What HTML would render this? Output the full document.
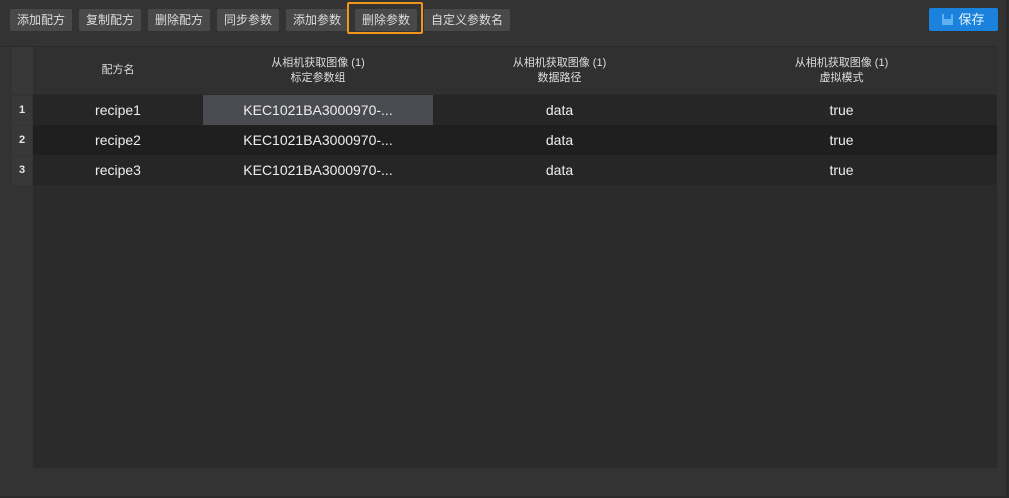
<!DOCTYPE html><html><head><meta charset="utf-8"><style>
body{margin:0;width:1009px;height:498px;background:#333;font-family:"Liberation Sans","Noto Sans CJK SC",sans-serif;color:#e6e6e6;position:relative;overflow:hidden}
.b{position:absolute;top:9px;height:22px;background:#494949;border-radius:2px;font-size:12px;line-height:22px;text-align:center;color:#ddd}
.a{position:absolute}
.hd{position:absolute;top:47px;height:47px;background:#303030;font-size:11px;line-height:15px;text-align:center;color:#ddd;display:flex;align-items:center;justify-content:center;border-right:1px solid #262626}
.c{position:absolute;font-size:14px;text-align:center;line-height:30px;color:#eee}
.n{position:absolute;left:12px;width:20px;height:29px;background:#383838;font-size:11px;font-weight:bold;text-align:center;line-height:29px}
</style></head><body>
<div class="b" style="left:10px;width:62px">添加配方</div>
<div class="b" style="left:79px;width:62px">复制配方</div>
<div class="b" style="left:148px;width:62px">删除配方</div>
<div class="b" style="left:217px;width:62px">同步参数</div>
<div class="b" style="left:286px;width:62px">添加参数</div>
<div class="a" style="left:347px;top:2px;width:76px;height:32px;border:2px solid #f0961e;box-sizing:border-box;border-radius:2px"></div>
<div class="b" style="left:355px;width:62px">删除参数</div>
<div class="b" style="left:424px;width:86px">自定义参数名</div>
<div class="b" style="left:929px;top:8px;width:69px;height:23px;background:#1a82dc;color:#e8f2ff;font-size:13px;line-height:23px"><svg width="11" height="11" viewBox="0 0 11 11" style="margin-right:5px;vertical-align:-1px"><path d="M0 0h2v5h7V0h2v11H0z" fill="#5fb0f0"/></svg>保存</div>
<div class="a" style="left:0;top:46px;width:997px;height:1px;background:#2a2a2a"></div>
<div class="a" style="left:33px;top:94px;width:964px;height:374px;background:#2b2b2b"></div>
<div class="a" style="left:12px;top:47px;width:21px;height:421px;background:#333"></div>
<div class="a" style="left:12px;top:47px;width:21px;height:47px;background:#383838"></div>
<div class="hd" style="left:33px;width:170px">配方名</div>
<div class="hd" style="left:203px;width:230px">从相机获取图像 (1)<br>标定参数组</div>
<div class="hd" style="left:433px;width:253px">从相机获取图像 (1)<br>数据路径</div>
<div class="hd" style="left:686px;width:311px;border-right:none">从相机获取图像 (1)<br>虚拟模式</div>
<div class="a" style="left:33px;top:95px;width:964px;height:30px;background:#262626"></div>
<div class="a" style="left:33px;top:125px;width:964px;height:30px;background:#1f1f1f"></div>
<div class="a" style="left:33px;top:155px;width:964px;height:30px;background:#262626"></div>
<div class="a" style="left:203px;top:95px;width:230px;height:30px;background:#4a4b50"></div>
<div class="n" style="top:96px">1</div><div class="n" style="top:126px">2</div><div class="n" style="top:156px">3</div>
<div class="c" style="left:33px;width:170px;top:95px">recipe1</div><div class="c" style="left:203px;width:230px;top:95px">KEC1021BA3000970-...</div><div class="c" style="left:433px;width:253px;top:95px">data</div><div class="c" style="left:686px;width:311px;top:95px">true</div>
<div class="c" style="left:33px;width:170px;top:125px">recipe2</div><div class="c" style="left:203px;width:230px;top:125px">KEC1021BA3000970-...</div><div class="c" style="left:433px;width:253px;top:125px">data</div><div class="c" style="left:686px;width:311px;top:125px">true</div>
<div class="c" style="left:33px;width:170px;top:155px">recipe3</div><div class="c" style="left:203px;width:230px;top:155px">KEC1021BA3000970-...</div><div class="c" style="left:433px;width:253px;top:155px">data</div><div class="c" style="left:686px;width:311px;top:155px">true</div>
<div class="a" style="left:1006px;top:0;width:3px;height:498px;background:#2a2a2a"></div>
<div class="a" style="left:0;top:496px;width:1009px;height:2px;background:#2a2a2a"></div>
</body></html>
